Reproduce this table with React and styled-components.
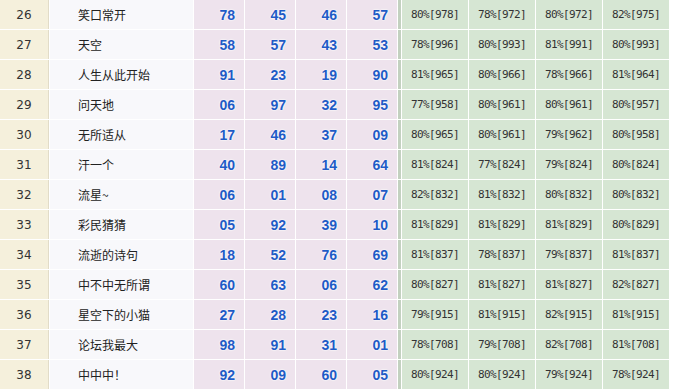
import React from 'react';
import styled, { createGlobalStyle } from 'styled-components';

const rows = [
    ['26', '笑口常开', ['78', '45', '46', '57'], ['80%[978]', '78%[972]', '80%[972]', '82%[975]']],
    ['27', '天空', ['58', '57', '43', '53'], ['78%[996]', '80%[993]', '81%[991]', '80%[993]']],
    ['28', '人生从此开始', ['91', '23', '19', '90'], ['81%[965]', '80%[966]', '78%[966]', '81%[964]']],
    ['29', '问天地', ['06', '97', '32', '95'], ['77%[958]', '80%[961]', '80%[961]', '80%[957]']],
    ['30', '无所适从', ['17', '46', '37', '09'], ['80%[965]', '80%[961]', '79%[962]', '80%[958]']],
    ['31', '汗一个', ['40', '89', '14', '64'], ['81%[824]', '77%[824]', '79%[824]', '80%[824]']],
    ['32', '流星~', ['06', '01', '08', '07'], ['82%[832]', '81%[832]', '80%[832]', '80%[832]']],
    ['33', '彩民猜猜', ['05', '92', '39', '10'], ['81%[829]', '81%[829]', '81%[829]', '80%[829]']],
    ['34', '流逝的诗句', ['18', '52', '76', '69'], ['81%[837]', '78%[837]', '79%[837]', '81%[837]']],
    ['35', '中不中无所谓', ['60', '63', '06', '62'], ['80%[827]', '81%[827]', '81%[827]', '82%[827]']],
    ['36', '星空下的小猫', ['27', '28', '23', '16'], ['79%[915]', '81%[915]', '82%[915]', '81%[915]']],
    ['37', '论坛我最大', ['98', '91', '31', '01'], ['78%[708]', '79%[708]', '82%[708]', '81%[708]']],
    ['38', '中中中！', ['92', '09', '60', '05'], ['80%[924]', '80%[924]', '79%[924]', '78%[924]']],
];

const Global = createGlobalStyle`
    body {
        margin: 0;
        background: #ffffff;
    }
`;

const Table = styled.div`
    display: flex;
    flex-direction: column;
    gap: 1px;
    width: 674px;
    background: #ffffff;
`;

const Row = styled.div`
    display: grid;
    grid-template-columns: 49px 143px repeat(4, 50px) 3px repeat(4, 66px);
    column-gap: 1px;
    height: 29px;
`;

const Rank = styled.div`
    display: flex;
    align-items: center;
    justify-content: center;
    background: #f5f0dc;
    border-right: 1px solid #e2dcc8;
    font: 12px "DejaVu Sans", sans-serif;
    color: #333333;
`;

const Name = styled.div`
    display: flex;
    align-items: center;
    padding-left: 28px;
    background: #f8f8fb;
    font: 12px "Noto Sans CJK SC", sans-serif;
    color: #222222;
`;

const Num = styled.div`
    display: flex;
    align-items: center;
    justify-content: flex-end;
    padding-right: 9px;
    background: #eee3ed;
    font: bold 14px "Liberation Sans", Arial, sans-serif;
    color: #1f5bc6;
    text-shadow: 0 0 2px #ffffff, 0 0 2px #ffffff;
`;

const Divider = styled.div`
    background: #c3d1c0;
`;

const Pct = styled.div`
    display: flex;
    align-items: center;
    justify-content: center;
    background: #d6e6d3;
    font: 11px "DejaVu Sans Mono", monospace;
    letter-spacing: -0.6px;
    color: #333333;
`;

export default function App() {
    return (
        <>
            <Global />
            <Table>
                {rows.map(([rank, name, nums, pcts]) => (
                    <Row key={rank}>
                        <Rank>{rank}</Rank>
                        <Name>{name}</Name>
                        {nums.map((n, i) => <Num key={i}>{n}</Num>)}
                        <Divider />
                        {pcts.map((p, i) => <Pct key={i}>{p}</Pct>)}
                    </Row>
                ))}
            </Table>
        </>
    );
}
